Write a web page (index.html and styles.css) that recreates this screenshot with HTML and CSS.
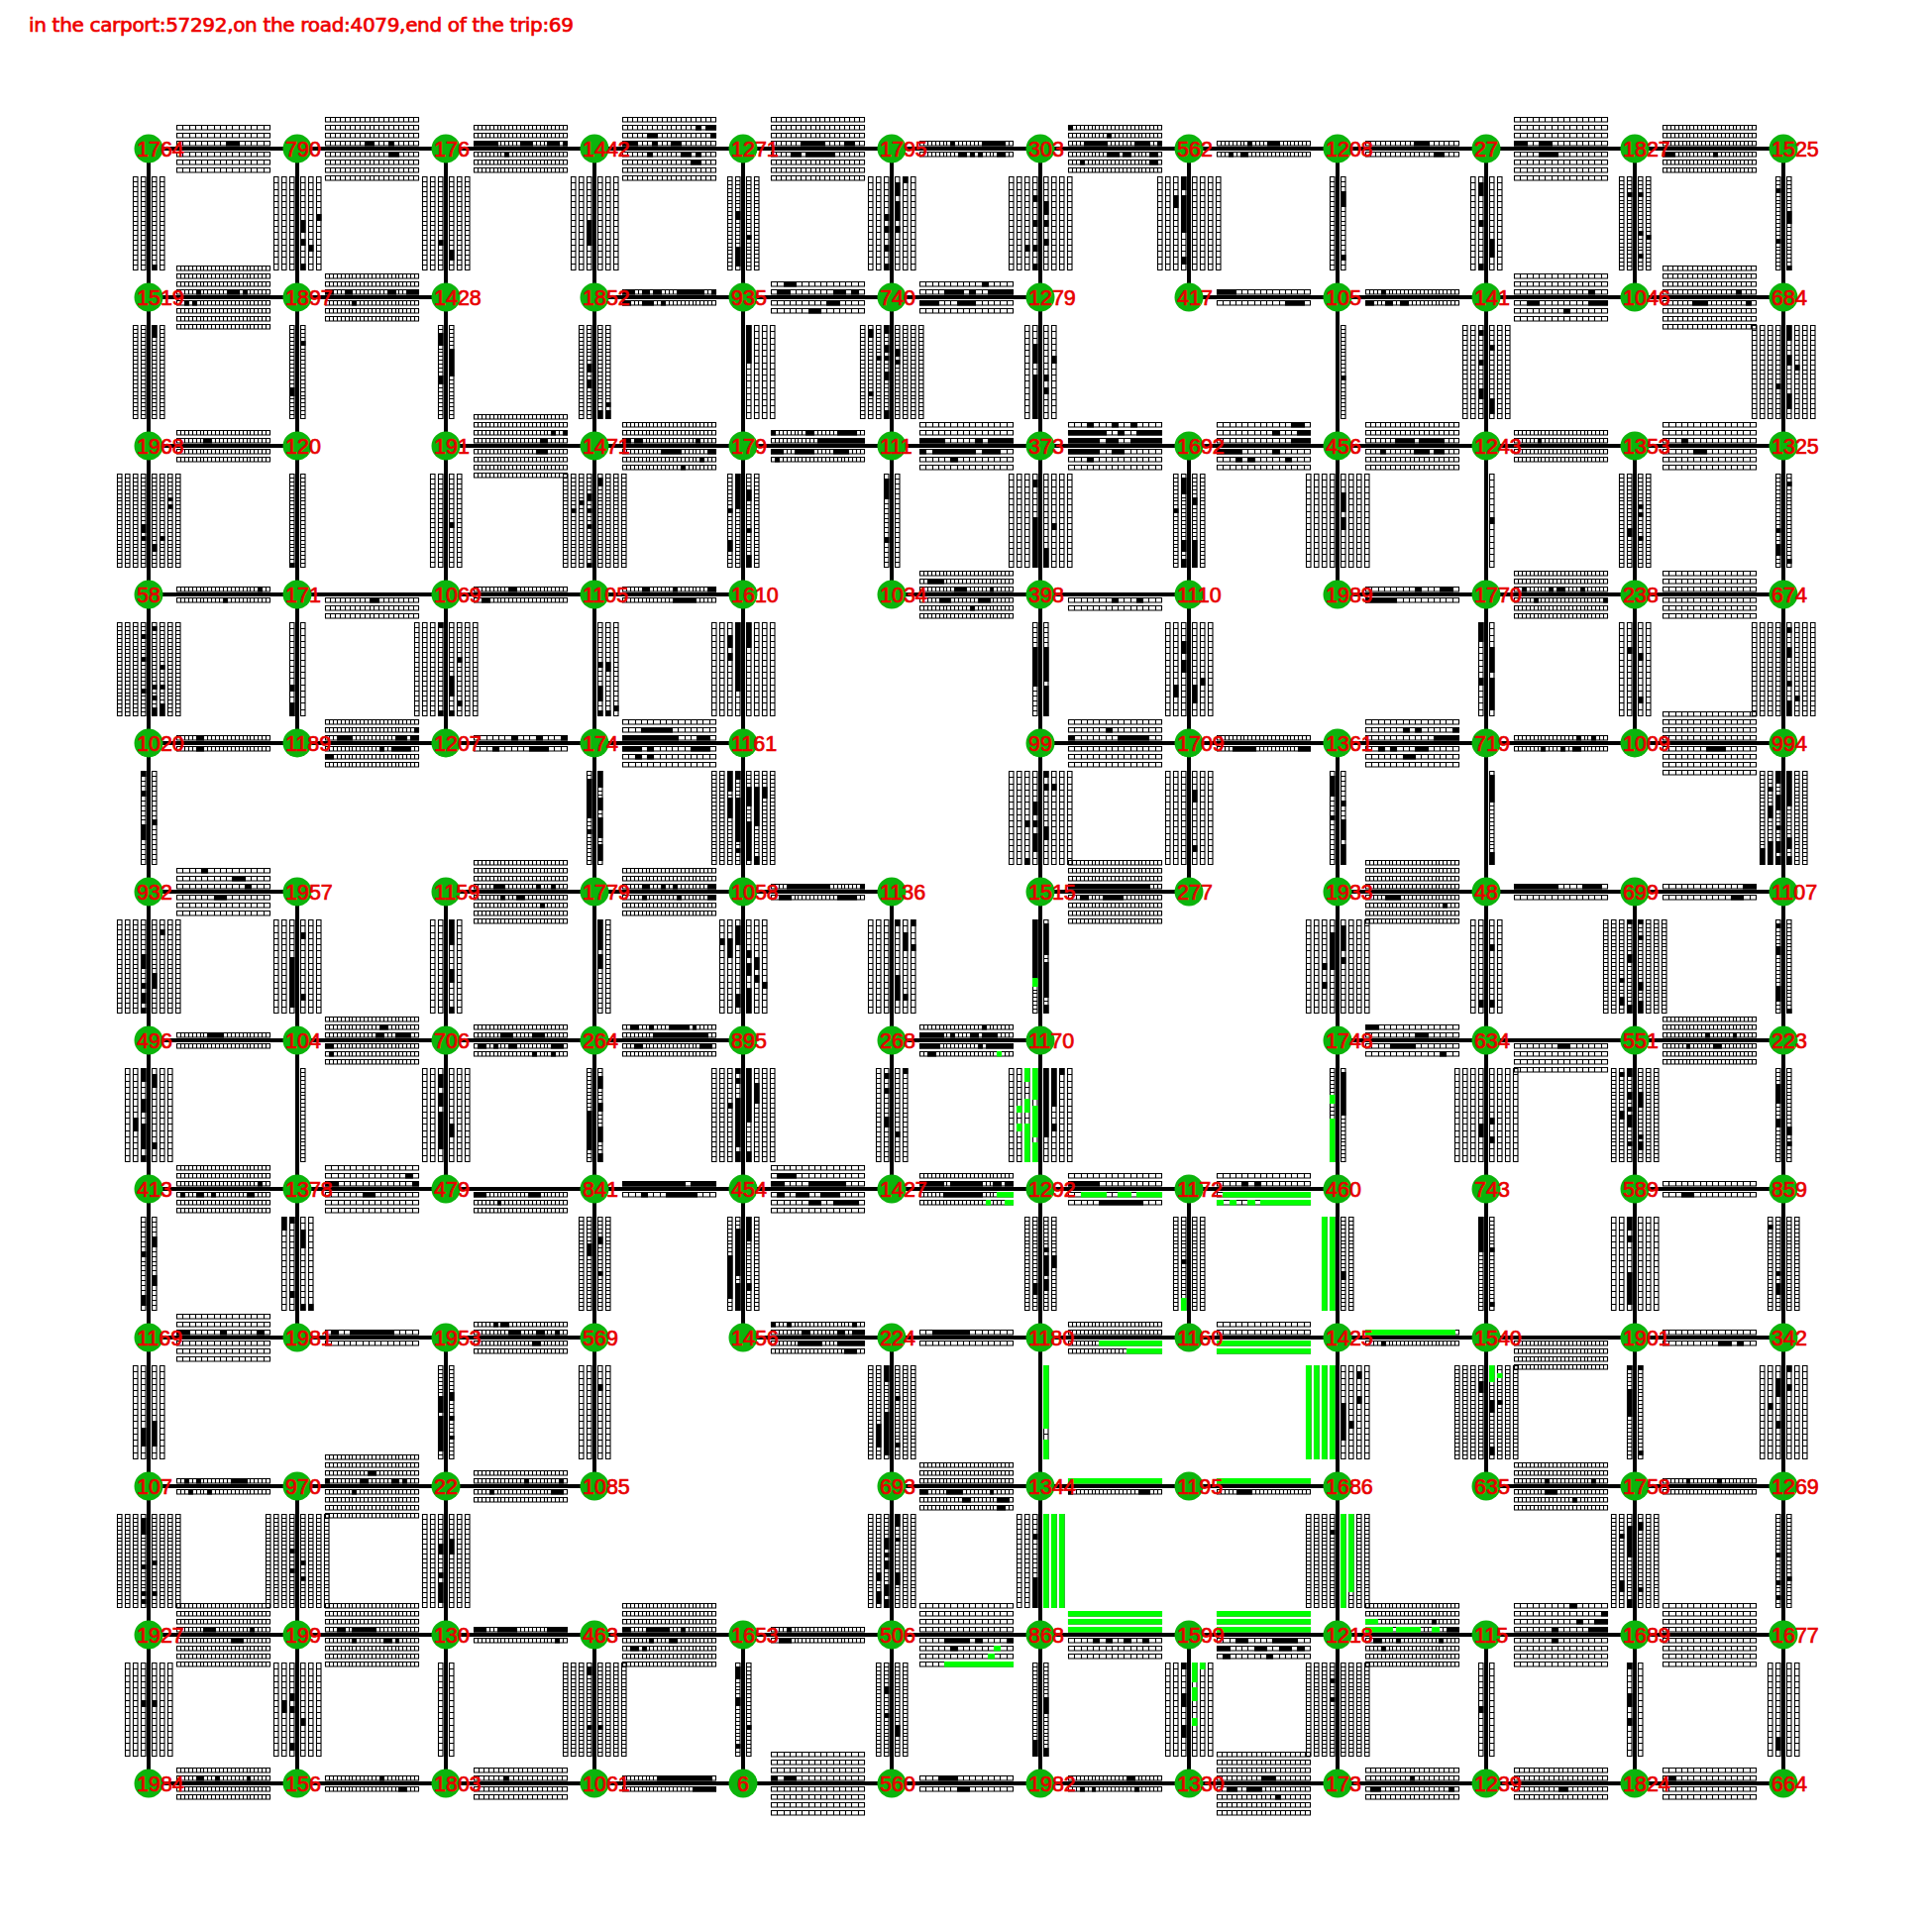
FILE: index.html
```html
<!DOCTYPE html>
<html lang="en">
<head>
<meta charset="utf-8">
<title>Traffic grid</title>
<link rel="stylesheet" href="styles.css">
</head>
<body>
<svg id="grid" class="grid" width="1950" height="1950" viewBox="0 0 1950 1950" xmlns="http://www.w3.org/2000/svg">
<text class="status" x="29" y="32" textLength="550" lengthAdjust="spacing">in the carport:57292,on the road:4079,end of the trip:69</text>
</svg>
<script src="script.js"></script>
</body>
</html>
```
FILE: styles.css
```css
html, body { margin: 0; padding: 0; background: #fff; }
.grid { display: block; }
.status { font-family: "DejaVu Sans", sans-serif; font-size: 20px; fill: #ee0000; stroke: #ee0000; stroke-width: 0.7px; }
.road { stroke: #000; stroke-width: 4px; }
.lane { fill: none; stroke: #000; stroke-width: 1.1px; }
.occupied { fill: #000; }
.arrived { fill: #00ff00; }
.node { fill: #0cb40c; }
.label { font-family: "Liberation Sans", Arial, sans-serif; font-size: 21.5px; fill: #e80000; stroke: #e80000; stroke-width: 0.7px; }
```
FILE: script.js
```js
const NAMES = [
 [1764,790,176,1442,1271,1795,303,562,1208,27,1827,1525],
 [1519,1897,1428,1852,935,740,1279,417,105,141,1046,684],
 [1968,120,191,1471,179,111,373,1692,456,1243,1353,1325],
 [58,171,1069,1105,1610,1034,398,1110,1989,1770,238,674],
 [1020,1189,1207,174,1161,0,99,1709,1361,719,1009,994],
 [932,1957,1159,1779,1058,1136,1515,277,1933,48,699,1107],
 [496,104,706,264,895,268,1170,0,1748,634,551,223],
 [413,1378,479,841,454,1427,1292,1172,460,743,589,859],
 [1169,1981,1953,569,1456,224,1180,1160,1425,1540,1901,342],
 [107,970,22,1085,0,693,1344,1195,1686,635,1758,1269],
 [1927,199,130,463,1653,506,868,1599,1218,115,1689,1677],
 [1984,156,1803,1061,6,560,1982,1330,173,1239,1824,664]
];
/* kind row col cells | lanes before | runs | lanes after | runs
   runs: lane:from-to,from-to;lane:... with g for the green state */
const EDGES = `
h 0 0 a|3|0:47-52,56-62|3|
h 0 1 b|4|0:40-51,62-69|4|0:62-75
h 0 2 c|3|0:0-24,47-57,75-85,90-94|3|0:30-32
h 0 3 b|4|0:0-16,29-35,50-57;1:25-35,87-94;2:74-80,82-94|4|0:25-32,59-69,72-76;1:68-79
h 0 4 b|4|0:32-52,74-85|4|0:18-32,37-41,42-66
h 0 5 c|1|0:31-37,63-87|1|0:41-47,51-55,58-63,79-87
h 0 6 c|3|0:16-38,68-81,89-94;1:41-45;2:0-3|3|0:41-49,53-62,83-89;1:10-14,83-92
h 0 7 c|1|0:32-37,51-63|1|0:10-14,22-32
h 0 8 b|1|0:47-63|1|0:70-79
h 0 9 a|4|0:0-11,23-36|4|0:23-44
h 0 10 c|3||3|0:0-10,52-54
h 1 0 c|4|0:20-23,50-61,68-71|4|0:6-11,14-18
h 1 1 c|3|0:0-8,18-28,62-71,83-93|3|0:28-32
h 1 3 c|1|0:0-11,20-28,31-38,56-84,90-94|1|0:0-9,21-32,38-42
h 1 4 a|2|0:9-18,65-75,79-85;1:14-23|2|0:56-70;1:37-47
h 1 5 a|2|0:23-45,50-53,71-93;1:63-71|2|0:0-16,39-59
h 1 7 a|1|0:0-19|1|0:70-90
h 1 8 c|1|0:15-19|1|0:0-6,20-28,37-44
h 1 9 a|3|0:74-78|3|0:15-28,78-91;1:50-54
h 1 10 b|4|0:72-75|4|0:28-43,84-87
h 2 0 c|2|0:26-35|2|
h 2 2 c|4|0:67-74;1:78-84,89-92|4|0:62-74
h 2 3 c|3|0:0-9,11-18,74-76|3|0:38-58,88-94;1:78-84;2:57-63
h 2 4 c|2|0:47-94;1:0-4,35-45,68-88|2|0:0-13,25-45,63-78;1:5-9
h 2 5 a|3|0:0-28,57-61,69-94|3|0:0-9,14-56,61-81;1:32-37
h 2 6 a|3|0:0-32,39-47,63-94;1:0-36,47-59,66-94;2:16-19,43-47,62-71|3|0:0-32,43-59;1:16-19
h 2 7 a|3|0:75-94;1:57-61,79-94;2:75-89|3|0:0-22,57-65;1:19-23,29-32,71-75
h 2 8 b|3|0:31-48,56-79|3|0:16-22,50-66,68-79
h 2 9 c|2|0:25-28|2|
h 2 10 a|3|0:18-24|3|0:32-42
h 3 0 c|1|0:83-87|1|0:48-50
h 3 1 b|0||3|0:43-55
h 3 2 c|1|0:35-43|1|0:8-15
h 3 3 c|1|0:20-28,50-54,88-94|1|0:50-76
h 3 5 c|3|0:37-47,71-76;1:9-22|3|0:19-32,59-71;1:49-51
h 3 6 a|0||2|0:43-50,66-71
h 3 8 a|1|0:47-52,75-85|1|0:0-32
h 3 9 c|3|0:8-11,36-40,43-52,65-71|3|0:18-23,89-92
h 3 10 a|3||3|
h 4 0 c|1|0:21-27|1|0:18-27
h 4 1 c|3|0:12-28,71-81,87-93;1:89-93|3|0:56-59,68-87;1:0-6
h 4 2 a|1|0:38-42,62-66,90-94|1|0:19-28,56-76
h 4 3 a|3|0:3-54,76-86;1:19-50|3|0:0-17,23-27,66-86;1:15-20,23-27
h 4 6 a|3|0:0-8,47-79;1:36-43|3|
h 4 7 c|1||1|0:16-41,83-94
h 4 8 a|3|0:70-94;1:37-43,52-56,89-94|3|0:10-19,28-32,50-62;1:37-47
h 4 9 c|1|0:62-65,79-84|1|0:28-30,47-49,59-66
h 4 10 a|4||4|0:46-54,57-59
h 5 0 a|3|0:66-76;1:56-66;2:28-33|3|0:37-52
h 5 2 c|4|0:20-32,62-66,78-82|4|0:26-28,42-52;1:65-67
h 5 3 c|3|0:20-28,39-42,51-54,88-93|3|0:18-21,55-57,88-94
h 5 4 c|1|0:14-60,90-94|1|0:9-19,66-86
h 5 6 c|4|0:0-81|4|0:10-18,36-53
h 5 8 c|4||4|0:20-36;1:79-81
h 5 9 a|1|0:0-44,72-89|1|
h 5 10 a|1|0:84-94|1|0:70-79
h 6 0 c|1|0:32-42,43-46|1|
h 6 1 c|3|0:50-58,72-85;1:56-63|3|0:0-6;1:2-6
h 6 2 c|2|0:26-39,57-71|2|0:3-11,19-23,37-43,78-90;1:58-62,78-83
h 6 3 c|2|0:30-86;1:7-16,26-32,46-66,70-74|2|0:13-20,80-92
h 6 5 c|2|0:0-25,31-37,51-57,63-79;1:63-66|2|0:0-19,57-61,65-94;1:7-15,g79-82
h 6 8 a|2|0:52-62;1:0-15|2|0:23-47;1:75-79
h 6 9 a|0||4|0:46-55
h 6 10 c|3|0:42-44,70-72|3|0:23-25,49-57
h 7 0 c|3|0:83-87|3|0:2-6,21-27,34-39,71-79
h 7 1 a|3|0:2-14,89-93;1:84-89|3|0:37-47
h 7 2 c|0||3|0:0-11,54-66;1:24-28
h 7 3 a|1|0:0-3,7-62,66-94|1|0:19-24,46-78
h 7 4 a|3|0:0-15,39-78;1:7-27|3|0:7-11,27-40,48-66;1:35-48,62-86
h 7 5 c|2|0:0-25,31-61,75-84,87-94|2|0:23-61,g79-94;1:g66-68,g88-94
h 7 6 a|2|0:0-32|2|0:g12-39,g51-63,g71-91;1:32-75
h 7 7 a|2|0:24-29,37-42|2|0:g6-94;1:g0-5,g15-19,g30-38,g43-94
h 7 10 a|1||1|0:18-32
h 8 0 a|3|0:2-10,43-52,84-89|3|
h 8 1 a|1|0:8-14,23-71|1|
h 8 2 c|2|0:37-47,63-71,83-86;1:19-24,28-37|2|0:57-66
h 8 4 c|2|0:31-40,65-73,84-94;1:0-5,15-21,84-88|2|0:28-51,68-94;1:75-86
h 8 5 a|1|0:13-52|1|
h 8 6 c|2||2|0:g32-94;1:g58-94
h 8 7 a|2||2|0:g0-94;1:g0-94
h 8 8 c|1|0:g0-89|1|0:15-19
h 8 9 c|0||4|
h 8 10 a|1||1|0:58-66,78-83
h 9 0 c|1|0:6-12,18-21,56-72|1|0:12-15,31-34
h 9 1 c|4|0:0-5,36-42,67-74,79-84;1:44-49|4|0:26-32
h 9 2 c|2|0:51-54,85-87|2|0:15-19,78-90
h 9 5 c|3||3|0:0-8,28-45,69-75;1:45-49,79-91;2:79-85
h 9 6 c|1|0:g0-94|1|0:0-5,69-83
h 9 7 c|1|0:g0-94|1|0:18-37
h 9 9 c|3|0:32-35,77-79|3|0:32-43;1:58-61
h 9 10 c|1|0:24-29,56-58|1|
h 10 0 c|4|0:27-38,75-79|4|0:56-65
h 10 1 c|4|0:13-20,27-50|4|0:28-32,60-65,70-75
h 10 2 c|1|0:0-11,24-42,75-94|1|0:82-85
h 10 3 c|4|0:0-8,24-46,57-61|4|0:28-32,47-54;1:8-15,19-21
h 10 4 c|1|0:17-20|1|0:9-20
h 10 5 a|4||4|0:28-53,57-61,85-94;1:29-32,g76-80;2:g66-71;3:g24-94
h 10 6 a|3|0:g0-94;1:g0-94;2:g0-94|3|0:24-33,37-46,57-61,75-79
h 10 7 a|3|0:g0-94;1:g0-94;2:g0-94|3|0:18-32,57-84;1:0-10,37-47,65-75,80-84;2:5-9,47-50
h 10 8 c|4|0:g0-26,g30-54,g67-75,84-94;1:g0-13,65-67|4|0:9-14,33-37,74-78;1:16-20
h 10 9 a|4|0:37-42,75-94;1:65-71,84-94;2:89-94;3:56-61|4|0:37-46
h 10 10 a|4||4|
h 11 0 c|2|0:18-27,41-45,71-74|2|
h 11 1 c|1|0:56-59|1|0:75-81
h 11 2 b|2|0:30-34|2|
h 11 3 c|1|0:37-91|1|0:71-94
h 11 4 a|4|0:0-8,12-16,20-25|4|
h 11 5 a|1|0:16-38|1|0:37-47
h 11 6 c|1|0:57-68|1|0:10-16,24-27,65-68
h 11 7 b|4|0:43-60|4|0:12-20,29-43;1:60-62
h 11 8 b|2|0:43-48|2|0:6-13,84-88
h 11 9 b|2||2|0:46-54
h 11 10 a|2|0:8-14|2|
v 0 0 b|2||2|0:87-91
v 0 1 a|3||3|0:42-57,61-66,89-94;1:70-76;2:37-43
v 0 2 b|3|0:62-68|3|0:75-79,81-85
v 0 3 a|3|0:42-66|3|
v 0 4 c|2|0:37-43,72-90|2|0:58-64
v 0 5 a|3|0:37-41,49-52,66-75,89-94|3|0:9-19,24-43,47-57;1:0-9
v 0 6 a|4|0:18-28,44-47,66-70,89-94;1:66-70|4|0:24-38,42-47,62-66
v 0 7 a|4|0:0-10,18-57,79-90;1:18-33|4|
v 0 8 b|1||1|0:13-29,77-81
v 0 9 a|2|0:9-18,43-51,89-94|2|0:62-79
v 0 10 c|2|0:14-17|2|0:14-17,54-57,79-83;1:58-62
v 0 11 c|1|0:11-15,64-68|1|0:35-46,90-94
v 1 0 c|2||2|0:0-13
v 1 1 c|1|0:61-71|1|0:17-21
v 1 2 c|1|0:9-19,51-57|1|0:25-50
v 1 3 c|2|0:41-47,55-62|2|0:85-94;1:78-80,85-94
v 1 4 a|0||4|0:0-39
v 1 5 c|4|0:0-6,19-27,31-37,47-55,86-94;1:31-37;2:5-13,65-71|4|0:23-33,35-40
v 1 6 a|2|0:19-37,51-94|2|0:47-57,65-71;1:29-37
v 1 8 c|0||1|0:49-51
v 1 9 b|3|0:7-11,35-37,62-73|3|0:18-22,72-77,80-87
v 1 11 b|4|0:61-63|4|0:0-13,31-39,67-83;1:41-46
v 2 0 c|4|0:52-57,61-66|4|0:70-79;1:61-66;2:25-29,30-37
v 2 1 c|1|0:90-94|1|
v 2 2 b|2||2|0:50-55
v 2 3 c|4|0:19-28,35-38,51-55,90-94;1:27-30;2:36-39|4|0:5-11
v 2 4 c|2|0:0-37;1:35-39,65-79|2|0:15-27,53-55,83-93
v 2 5 b|1|0:5-27,62-67|1|
v 2 6 a|4|0:4-9,46-94|4|0:75-94;1:47-57
v 2 7 c|2|0:4-19,65-79,88-94;1:35-39|2|0:23-33,65-94
v 2 8 a|4||4|0:19-39,43-57
v 2 9 a|0||1|0:43-51
v 2 10 c|2|0:56-61|2|0:33-37,39-42,62-68
v 2 11 c|1|0:55-57,70-82|1|0:8-13,86-89
v 3 0 c|4|0:11-15,35-39,65-69|4|0:4-8,62-66,73-79,85-94;1:42-45,63-66,84-93
v 3 1 a|1|0:65-71,80-94|1|
v 3 2 b|4|0:0-7,87-94|4|0:53-62,66-72,87-94;1:34-38,81-85
v 3 3 b|0||3|0:41-45,65-79,87-94;1:41-49,87-94;2:83-87
v 3 4 a|4|0:0-71;1:10-24,32-37|4|0:0-24
v 3 6 b|1|0:27-63|1|0:23-59,66-94
v 3 7 a|3|0:18-30,37-51;1:65-75|3|0:65-79;1:56-61
v 3 9 a|1|0:0-18,57-62|1|0:28-49,57-85
v 3 10 a|2|0:23-28|2|0:32-39,74-78
v 3 11 b|4||4|0:3-10,26-37,57-63,81-94;1:73-79
v 4 0 b|1|0:0-5,19-23,55-70|1|0:47-55
v 4 3 c|1|0:7-47,57-62|1|0:0-15,27-41,47-67,74-92
v 4 4 c|4|0:0-7,27-72,78-84;1:0-7,9-21,27-47|4|0:15-35,52-92;1:17-53,86-94;2:17-27
v 4 6 a|4|0:31-45,47-51,63-82;1:48-54,86-91|4|0:0-9,13-17,58-66;1:15-19
v 4 7 a|3||3|0:18-32,75-80
v 4 8 b|1|0:5-25,45-51|1|0:29-37,47-57,60-68,72-93
v 4 9 c|0||1|0:5-31,82-94
v 4 11 c|3|0:0-11,23-41,54-60,72-82,86-94;1:15-19,37-47,72-94;2:80-94|3|0:1-37,68-80,86-94
v 5 0 b|4|0:35-51,63-69,73-83,88-94|4|0:53-69;1:9-15
v 5 1 a|3|0:38-49,53-90|3|0:10-15,75-79
v 5 2 a|2||2|0:0-23,47-63,87-91
v 5 3 b|0||2|0:0-29,35-43,45-51
v 5 4 a|3|0:4-27,75-85;1:19-37;2:19-23|3|0:29-33,41-57,71-92;1:37-47,57-65;2:61-66
v 5 5 a|3||3|0:0-6,59-79;1:15-23,27-31,75-79;2:0-4,23-27
v 5 6 c|1|0:0-57,g60-65|1|0:5-37,43-79,88-94
v 5 8 a|4|0:13-47;1:46-52,61-66|4|0:5-33,37-43
v 5 9 a|2|0:82-87|2|0:23-31,82-87
v 5 10 c|4|0:0-4,37-43,87-94;1:57-59,77-85|4|0:0-2,15-19,61-71,84-94
v 5 11 c|1|0:2-8,27-37,65-83|1|0:89-94
v 6 0 a|3|0:0-11,31-43,55-79,86-94;1:51-63|3|0:7-19,78-82
v 6 1 c|0||1|
v 6 2 a|3|0:9-17,23-37,46-75,77-80|3|0:55-71
v 6 3 c|1|0:43-84|1|0:9-19,35-43,57-75,86-94
v 6 4 b|4|0:0-3,9-15,31-79,86-94;1:36-41|4|0:0-35,37-55,86-92;1:13-33
v 6 5 b|2|0:3-11,19-23,51-59|2|0:63-71;1:0-7
v 6 6 a|4|0:g0-31,g35-67,g75-94;1:g0-11,g31-43,g59-94;2:g39-44,g59-63|4|0:0-23,27-71;1:0-37,57-63;2:0-5
v 6 8 c|1|0:g27-36,g51-94|1|0:4-47
v 6 9 a|4|0:58-71|4|0:47-50,71-78
v 6 10 c|3|0:0-9,25-31,40-44,47-57,74-79;1:5-9,44-49|3|0:23-39,65-69,76-82
v 6 11 c|1|0:17-35,49-57|1|0:57-67,74-76
v 7 0 b|1|0:37-42,79-89|1|0:18-32,57-71
v 7 1 a|2|0:0-4,75-81;1:0-14|2|0:10-32,85-94;1:85-94
v 7 3 c|2|0:29-41|2|0:18-26,55-59
v 7 4 c|2|0:10-57,65-94;1:39-81|2|0:0-24,67-75
v 7 6 c|2|0:67-79|2|0:32-35,40-60,63-76;1:40-50
v 7 7 c|2|0:42-48,g83-94|2|
v 7 8 c|2|0:g0-94;1:g0-94|2|0:56-61
v 7 9 c|1|0:1-37|1|0:30-33,88-92
v 7 10 a|3|0:0-10,16-19,59-87|3|
v 7 11 c|2|0:55-59,65-77;1:6-9|2|
v 8 0 a|2|0:65-84|2|0:56-79
v 8 2 c|1|0:31-47,50-86|1|0:28-35,50-52,70-72
v 8 3 a|2||2|0:16-23
v 8 5 c|3|0:0-17,47-92;1:58-82|3|0:31-35,78-82
v 8 6 a|0||1|0:g3-65,g74-94
v 8 8 a|4|0:g0-94;1:g0-94;2:g0-94;3:g0-94|4|0:37-75;1:56-65;2:9-15,32-37
v 8 9 c|4|0:14-22,25-28|4|0:g0-14,36-47,84-91;1:g8-11,36-40
v 8 10 c|1|0:0-5,23-50|1|0:0-2,87-92
v 8 11 a|3|0:12-34,56-59;1:40-43|3|0:0-6,18-26
v 9 0 c|4|0:5-20,49-55,80-83,86-92|4|0:46-49,78-79
v 9 1 c|4|0:35-39,56-59|4|0:46-49,61-64
v 9 2 b|3|0:31-38,59-63,68-72,75-91|3|0:25-40
v 9 5 c|3|0:25-35,39-44,46-53,72-84,86-94;1:59-66,79-89|3|0:0-13,25-27,59-72
v 9 6 b|3|0:20-27,62-94|3|0:g0-94;1:g0-94;2:g0-94
v 9 8 c|4|0:16-18|4|0:g0-93;1:g0-79
v 9 10 c|3|0:11-42,86-94;1:21-23,65-77|3|0:7-17,76-79
v 9 11 c|1|0:39-42,65-70,82-84|1|0:61-64
v 10 0 a|3|0:37-43|3|0:37-41
v 10 1 a|3|0:31-35,46-51,83-90;1:36-53|3|0:54-58
v 10 2 a|1||1|
v 10 3 c|4|0:5-10,64-67|4|0:62-65
v 10 4 c|1|0:5-14,35-44,81-85|1|0:63-68
v 10 5 c|2|0:24-30,49-54|2|0:63-76
v 10 6 c|1|0:79-94|1|0:37-51,86-93
v 10 7 a|3|0:0-5,33-44,61-64,70-73|3|0:g0-17,g25-35,g54-57;1:g0-7
v 10 8 c|4|0:14-15,34-39|4|
v 10 9 a|1|0:42-51|1|
v 10 10 a|1|0:0-3,30-44,58-62|1|
v 10 11 a|2|0:74-87|2|
`.trim().split("\n");

const COUNT = { a: 15, b: 19, c: 24 };
const NS = "http://www.w3.org/2000/svg";
const svg = document.getElementById("grid");
const add = (name, attrs, text) => {
  const el = document.createElementNS(NS, name);
  for (const k in attrs) el.setAttribute(k, attrs[k]);
  if (text !== undefined) el.textContent = text;
  svg.appendChild(el);
  return el;
};
let outline = "", black = "", green = "";
const L = 94, W = 4.5;

/* a lane as a box: along is the running axis from s, across is the fixed axis from t */
function lane(horizontal, s, t, n, runs) {
  const box = (a0, a1, c0, c1) => horizontal
    ? `M${a0} ${c0}H${a1}V${c1}H${a0}Z`
    : `M${c0} ${a0}H${c1}V${a1}H${c0}Z`;
  outline += box(s + .5, s + L + .5, t + .5, t + W + .5);
  const edge = i => s + Math.round(i * L / n) + .5;
  for (let i = 1; i < n; i++) {
    const e = edge(i);
    outline += horizontal ? `M${e} ${t + .5}V${t + W + .5}` : `M${t + .5} ${e}H${t + W + .5}`;
  }
  for (const r of runs) {
    const g = r[0] === "g";
    const [a, b] = (g ? r.slice(1) : r).split("-").map(Number);
    let i0 = Math.round(a / L * n), i1 = Math.round(b / L * n);
    if (i1 <= i0) i1 = i0 + 1;
    if (i1 > n) i1 = n;
    const d = box(edge(i0) - .5, edge(i1) + .5, t, t + W + 1);
    if (g) green += d; else black += d;
  }
}

function side(kind, r, c, cells, nLanes, spec, before) {
  const n = +nLanes;
  const map = {};
  if (spec) for (const part of spec.split(";")) {
    const [i, list] = part.split(":");
    map[i] = list.split(",");
  }
  const cx = 150 + 150 * c, cy = 150 + 150 * r;
  for (let i = 0; i < n; i++) {
    const across = before ? -8 - 8 * i : 3 + 8 * i;
    if (kind === "h") lane(true, cx + 28, cy + across, cells, map[i] || []);
    else lane(false, cy + 28, cx + across, cells, map[i] || []);
  }
}

for (const row of EDGES) {
  const [head, n1, r1, n2, r2] = row.split("|");
  const [kind, r, c, cls] = head.split(" ");
  const R = +r, C = +c;
  const x = 150 + 150 * C, y = 150 + 150 * R;
  add("line", { class: "road", x1: x, y1: y, x2: kind === "h" ? x + 150 : x, y2: kind === "h" ? y : y + 150 });
  side(kind, R, C, COUNT[cls], n1, r1, true);
  side(kind, R, C, COUNT[cls], n2, r2, false);
}
add("path", { class: "lane", d: outline });
add("path", { class: "occupied", d: black });
add("path", { class: "arrived", d: green });

NAMES.forEach((row, r) => row.forEach((name, c) => {
  if (name) add("circle", { class: "node", cx: 150 + 150 * c, cy: 150 + 150 * r, r: 14.5 });
}));
NAMES.forEach((row, r) => row.forEach((name, c) => {
  if (name) add("text", { class: "label", x: 150 + 150 * c - (name < 10 ? 6 : 12), y: 158 + 150 * r }, name);
}));
```
